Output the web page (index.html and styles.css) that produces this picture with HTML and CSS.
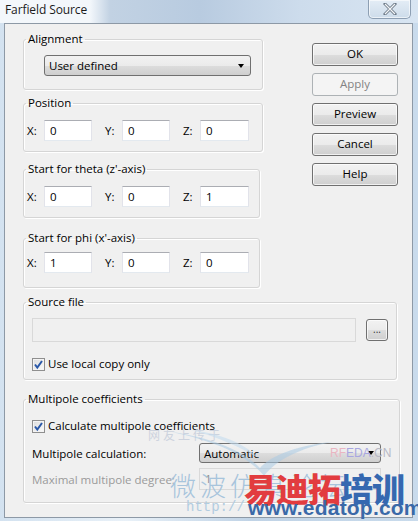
FILE: index.html
```html
<!DOCTYPE html>
<html>
<head>
<meta charset="utf-8">
<link rel="stylesheet" href="styles.css">
</head>
<body>
<div class="window">
  <div class="titlebar">
    <span class="title">Farfield Source</span>
    <div class="close">
      <svg width="14" height="12" viewBox="0 0 14 12"><path d="M2 1 L12 11 M12 1 L2 11" stroke="#6d7a88" stroke-width="3" stroke-linecap="square"/><path d="M2 1 L12 11 M12 1 L2 11" stroke="#f4f6f8" stroke-width="1.2"/></svg>
    </div>
  </div>
  <div class="client">
    <div class="leftcol">
      <fieldset class="group g-align">
        <legend>Alignment</legend>
        <div class="gbody">
          <div class="combo combo-align"><span>User defined</span><i class="arrow"></i></div>
        </div>
      </fieldset>
      <fieldset class="group g-pos">
        <legend>Position</legend>
        <div class="gbody xyz">
          <label>X:</label><div class="edit">0</div>
          <label>Y:</label><div class="edit">0</div>
          <label>Z:</label><div class="edit">0</div>
        </div>
      </fieldset>
      <fieldset class="group g-theta">
        <legend>Start for theta (z'-axis)</legend>
        <div class="gbody xyz">
          <label>X:</label><div class="edit">0</div>
          <label>Y:</label><div class="edit">0</div>
          <label>Z:</label><div class="edit">1</div>
        </div>
      </fieldset>
      <fieldset class="group g-phi">
        <legend>Start for phi (x'-axis)</legend>
        <div class="gbody xyz">
          <label>X:</label><div class="edit">1</div>
          <label>Y:</label><div class="edit">0</div>
          <label>Z:</label><div class="edit">0</div>
        </div>
      </fieldset>
    </div>
    <div class="buttons">
      <div class="btn">OK</div>
      <div class="btn disabled">Apply</div>
      <div class="btn">Preview</div>
      <div class="btn">Cancel</div>
      <div class="btn">Help</div>
    </div>
    <fieldset class="group wide g-src">
      <legend>Source file</legend>
      <div class="gbody">
        <div class="filerow">
          <div class="edit disabled-edit file"></div>
          <div class="btn small">...</div>
        </div>
        <div class="check"><span class="box"><svg width="11" height="11" viewBox="0 0 11 11"><path d="M2 5.5 L4.3 8.5 L9 2" fill="none" stroke="#2a58a8" stroke-width="2"/></svg></span>Use local copy only</div>
      </div>
    </fieldset>
    <fieldset class="group wide g-multi">
      <legend>Multipole coefficients</legend>
      <div class="gbody">
        <div class="check"><span class="box"><svg width="11" height="11" viewBox="0 0 11 11"><path d="M2 5.5 L4.3 8.5 L9 2" fill="none" stroke="#2a58a8" stroke-width="2"/></svg></span>Calculate multipole coefficients</div>
        <div class="mrow first">
          <span class="mlabel">Multipole calculation:</span>
          <div class="combo combo-multi"><span>Automatic</span><i class="arrow"></i></div>
        </div>
        <div class="mrow second">
          <span class="mlabel dis">Maximal multipole degree:</span>
          <div class="edit disabled-edit maxdeg">1</div>
        </div>
      </div>
    </fieldset>
  </div>
  <div class="watermark">
    <span class="wm-up">网友上传于</span>
    <svg class="wm-bird" width="160" height="50" viewBox="0 0 160 50"><path d="M0 4 C40 10 70 22 88 40 C96 30 120 18 160 14 C128 20 104 32 92 48 C76 28 46 14 0 4 Z" fill="#a9cbe3" opacity="0.55"/><path d="M20 2 C50 6 74 16 86 30 C70 20 48 10 20 2 Z" fill="#c5dcee" opacity="0.6"/></svg>
    <span class="wm-rf"><b class="r">RF</b><b class="e">EDA</b><b class="c">.CN</b></span>
    <span class="wm-wb">微波仿真论坛</span>
    <span class="wm-big"><b class="red">易迪拓</b><b class="blue">培训</b></span>
    <span class="wm-http">http://</span>
    <span class="wm-www">www.edatop.com</span>
  </div>
</div>
</body>
</html>
```
FILE: styles.css
```css
* { box-sizing: border-box; }
html, body { margin: 0; padding: 0; }
body {
  width: 418px;
  height: 521px;
  overflow: hidden;
  font-family: "Open Sans", "Noto Sans", sans-serif;
  font-size: 11.5px;
  color: #000;
}
.window {
  position: relative;
  width: 418px;
  height: 521px;
  background: linear-gradient(90deg, #d3e2f0 0%, #e9f1f8 30%, #c0d3e6 60%, #c9dbec 100%);
  overflow: hidden;
}
.titlebar {
  height: 23px;
  display: flex;
  align-items: flex-start;
  padding-left: 5px;
  background: linear-gradient(90deg, #f3f7fb 0px, #f3f7fb 90px, #c2d2e3 110px, #b8cbe0 200px, #cddcec 300px, #d8e5f2 418px);
}
.title {
  font-size: 12px;
  line-height: 19px;
  color: #1b1b1b;
  letter-spacing: -0.1px;
}
.close {
  margin-left: auto;
  margin-right: 7px;
  width: 43px;
  height: 19px;
  border: 1px solid #8d9fb3;
  border-top: none;
  border-radius: 0 0 5px 5px;
  background: linear-gradient(#e4edf6, #cddcea);
  display: flex;
  align-items: center;
  justify-content: center;
  box-shadow: inset 0 0 0 1px rgba(255,255,255,0.6);
}
.client {
  margin-left: 4px;
  width: 409px;
  height: 495px;
  border: 1px solid #8d99a6;
  background: #f0f0f0;
  display: grid;
  grid-template-columns: 240px 86px;
  column-gap: 49px;
  align-content: start;
  padding: 8px 0 0 18px;
}
.leftcol { display: flex; flex-direction: column; }
.buttons {
  display: flex;
  flex-direction: column;
  gap: 7px;
  padding-top: 11px;
}
.group {
  margin: 0;
  border: 1px solid #d5d5d5;
  border-radius: 3px;
  box-shadow: inset 1px 1px 0 #fff, 1px 1px 0 #fff;
  padding: 0;
  min-width: 0;
}
.group legend {
  padding: 0 2px;
  margin-left: 2px;
  font-size: 11.5px;
  line-height: 14px;
  color: #000;
}
.g-align .gbody { padding: 9px 0 13px 20px; }
.g-pos { margin-top: 6px; }
.g-pos .gbody { padding: 10px 0 10px 3px; }
.g-theta { margin-top: 10px; width: 237px; }
.g-theta .gbody { padding: 10px 0 10px 3px; }
.g-phi { margin-top: 13px; width: 237px; }
.g-phi .gbody { padding: 7px 0 14px 3px; }
.wide { grid-column: 1 / span 2; }
.g-src { margin-top: 7px; width: 374px; }
.g-src .gbody { padding: 9px 8px 8px 8px; }
.g-src .check { margin-top: 15px; }
.g-multi { margin-top: 12px; width: 377px; }
.g-multi .gbody { padding: 13px 8px 12px 8px; }

.combo {
  height: 21px;
  border: 1px solid #707070;
  border-radius: 3px;
  background: linear-gradient(#f2f2f2 0%, #ebebeb 50%, #dddddd 51%, #cfcfcf 100%);
  display: flex;
  align-items: center;
  padding-left: 4px;
  line-height: 19px;
}
.combo-align { width: 207px; }
.combo span { flex: 1; }
.arrow {
  width: 0; height: 0;
  border-left: 3.5px solid transparent;
  border-right: 3.5px solid transparent;
  border-top: 4px solid #000;
  margin-right: 6px;
}
.xyz {
  display: grid;
  grid-template-columns: 17px 48px 30px 48px 30px 49px;
  align-items: center;
}
.xyz label:nth-of-type(2), .xyz label:nth-of-type(3) { padding-left: 13px; }
.edit {
  height: 21px;
  background: #fff;
  border: 1px solid #dbdfe6;
  border-top-color: #abadb3;
  border-left-color: #e2e3ea;
  border-right-color: #e2e3ea;
  border-bottom-color: #e3e9ef;
  padding-left: 5px;
  line-height: 19px;
}
.disabled-edit { background: #f0f0f0; border-color: #d9d9d9; color: #8d8d8d; }
.filerow { display: flex; align-items: center; gap: 10px; }
.file { width: 325px; height: 24px; }
.btn {
  height: 23px;
  border: 1px solid #707070;
  border-radius: 3px;
  background: linear-gradient(#f2f2f2 0%, #ebebeb 50%, #dddddd 51%, #cfcfcf 100%);
  box-shadow: inset 0 0 0 1px rgba(255,255,255,0.7);
  text-align: center;
  line-height: 20px;
  font-size: 11.5px;
}
.btn.disabled {
  border-color: #adb2b5;
  background: #f4f4f4;
  color: #838383;
  box-shadow: none;
}
.btn.small { width: 22px; height: 22px; line-height: 18px; font-size: 10px; color: #333; }
.check {
  display: flex;
  align-items: center;
  gap: 3px;
  line-height: 14px;
}
.box {
  width: 13px; height: 13px;
  border: 1px solid #8f8f8f;
  background: linear-gradient(135deg, #dcdcdc, #fbfbfb);
  box-shadow: inset 0 0 0 1px #f4f4f4;
  display: flex; align-items: center; justify-content: center;
}
.mrow {
  display: grid;
  grid-template-columns: 167px 182px;
  align-items: center;
}
.mrow.first { margin-top: 10px; }
.mrow.second { margin-top: 5px; }
.mlabel.dis { color: #9a9a9a; }
.combo-multi { height: 20px; }
.maxdeg { height: 22px; }

.watermark { position: absolute; inset: 0; pointer-events: none; }
.wm-up { position: absolute; left: 148px; top: 428px; font-family: "Noto Sans CJK SC", sans-serif; font-size: 12px; line-height: 14px; color: #cdd3de; letter-spacing: 3px; }
.wm-bird { position: absolute; left: 172px; top: 428px; }
.wm-rf { position: absolute; left: 330px; top: 446px; font-family: "Liberation Sans", sans-serif; font-size: 12px; }
.wm-rf b { font-weight: normal; }
.wm-rf .r { color: #eab6c2; }
.wm-rf .e { color: #a8a6e0; }
.wm-rf .c { color: #b8b8c4; }
.wm-wb { position: absolute; left: 170px; top: 466px; font-family: "Noto Sans CJK SC", sans-serif; font-size: 26px; color: #a7c4dc; letter-spacing: 4px; font-weight: 300; }
.wm-big { position: absolute; left: 244px; top: 470px; font-family: "Noto Sans CJK SC", sans-serif; font-size: 33px; font-weight: 900; letter-spacing: -1px; line-height: 36px; }
.wm-big .red { color: #e23c3f; }
.wm-big .blue { color: #3568b0; }
.wm-http { position: absolute; left: 186px; top: 499px; font-family: "Liberation Mono", monospace; font-size: 14px; color: #b2cce0; }
.wm-www { position: absolute; left: 248px; top: 496px; font-family: "Liberation Sans", sans-serif; font-size: 21px; font-weight: bold; color: #3a69a8; letter-spacing: 0.2px; }
```
